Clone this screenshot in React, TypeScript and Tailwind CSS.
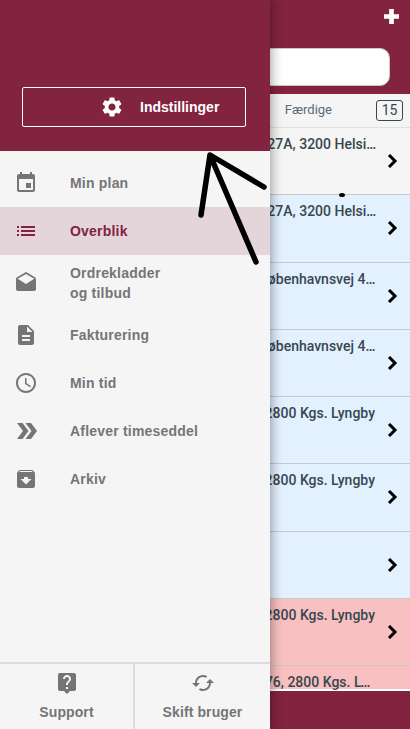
const FONT = "font-['Liberation_Sans',Arial,sans-serif]"

const ICONS = {
  event: 'M17 12h-5v5h5v-5zM16 1v2H8V1H6v2H5c-1.11 0-1.99.9-1.99 2L3 19c0 1.1.89 2 2 2h14c1.1 0 2-.9 2-2V5c0-1.1-.9-2-2-2h-1V1h-2zm3 18H5V8h14v11z',
  list: 'M3 13h2v-2H3v2zm0 4h2v-2H3v2zm0-8h2V7H3v2zm4 4h14v-2H7v2zm0 4h14v-2H7v2zM7 7v2h14V7H7z',
  drafts: 'M21.99 8c0-.72-.37-1.35-.94-1.7L12 1 2.95 6.3C2.38 6.65 2 7.28 2 8v10c0 1.1.9 2 2 2h16c1.1 0 2-.9 2-2l-.01-10zM12 13L3.74 7.84 12 3l8.26 4.84L12 13z',
  description: 'M14 2H6c-1.1 0-1.99.9-1.99 2L4 20c0 1.1.89 2 1.99 2H18c1.1 0 2-.9 2-2V8l-6-6zm2 16H8v-2h8v2zm0-4H8v-2h8v2zm-3-5V3.5L18.5 9H13z',
  schedule: 'M11.99 2C6.47 2 2 6.48 2 12s4.47 10 9.99 10C17.52 22 22 17.52 22 12S17.52 2 11.99 2zM12 20c-4.42 0-8-3.58-8-8s3.58-8 8-8 8 3.58 8 8-3.58 8-8 8zm.5-13H11v6l5.25 3.15.75-1.23-4.5-2.67z',
  archive: 'M20.54 5.23l-1.39-1.68C18.88 3.21 18.47 3 18 3H6c-.47 0-.88.21-1.16.55L3.46 5.23C3.17 5.57 3 6.02 3 6.5V19c0 1.1.9 2 2 2h14c1.1 0 2-.9 2-2V6.5c0-.48-.17-.93-.46-1.27zM12 17.5L6.5 12H10v-2h4v2h3.5L12 17.5zM5.12 5l.81-1h12l.94 1H5.12z',
  settings: 'M19.14 12.94c.04-.3.06-.61.06-.94 0-.32-.02-.64-.07-.94l2.03-1.58c.18-.14.23-.41.12-.61l-1.92-3.32c-.12-.22-.37-.29-.59-.22l-2.39.96c-.5-.38-1.03-.7-1.62-.94l-.36-2.54c-.04-.24-.24-.41-.48-.41h-3.84c-.24 0-.43.17-.47.41l-.36 2.54c-.59.24-1.13.57-1.62.94l-2.39-.96c-.22-.08-.47 0-.59.22L2.74 8.87c-.12.21-.08.47.12.61l2.03 1.58c-.05.3-.09.63-.09.94s.02.64.07.94l-2.03 1.58c-.18.14-.23.41-.12.61l1.92 3.32c.12.22.37.29.59.22l2.39-.96c.5.38 1.03.7 1.62.94l.36 2.54c.05.24.24.41.48.41h3.84c.24 0 .44-.17.47-.41l.36-2.54c.59-.24 1.13-.56 1.62-.94l2.39.96c.22.08.47 0 .59-.22l1.92-3.32c.12-.22.07-.47-.12-.61l-2.01-1.58zM12 15.6c-1.98 0-3.6-1.62-3.6-3.6s1.62-3.6 3.6-3.6 3.6 1.62 3.6 3.6-1.62 3.6-3.6 3.6z',
  help: 'M19 2H5c-1.11 0-2 .9-2 2v14c0 1.1.89 2 2 2h4l3 3 3-3h4c1.1 0 2-.9 2-2V4c0-1.1-.9-2-2-2zm-6 16h-2v-2h2v2zm2.07-7.75l-.9.92C13.45 11.9 13 12.5 13 14h-2v-.5c0-1.1.45-2.1 1.17-2.83l1.24-1.26c.37-.36.59-.86.59-1.41 0-1.1-.9-2-2-2s-2 .9-2 2H8c0-2.21 1.79-4 4-4s4 1.79 4 4c0 .88-.36 1.68-.93 2.25z',
  cached: 'M19 8l-4 4h3c0 3.31-2.69 6-6 6-1.01 0-1.97-.25-2.8-.7l-1.46 1.46C8.97 19.54 10.43 20 12 20c4.42 0 8-3.58 8-8h3l-4-4zM6 12c0-3.31 2.69-6 6-6 1.01 0 1.97.25 2.8.7l1.46-1.46C15.03 4.46 13.57 4 12 4c-4.42 0-8 3.58-8 8H1l4 4 4-4H6z',
  doubleChevron: 'M3 4h5.5l6 8-6 8H3l6-8zM11.5 4H17l6 8-6 8h-5.5l6-8z',
} as const

function Icon({ name, className }: { name: keyof typeof ICONS; className?: string }) {
  return (
    <svg viewBox="0 0 24 24" fill="currentColor" className={className}>
      <path d={ICONS[name]} />
    </svg>
  )
}

function Chevron() {
  return (
    <svg viewBox="0 0 12 14" className="w-[12px] h-[14px] shrink-0" fill="none" stroke="black" strokeWidth="3">
      <path d="M3 1 9 7 3 13" />
    </svg>
  )
}

const ROW_TEXT = "truncate text-[14px] leading-[16px] font-['Roboto',sans-serif] font-medium text-[#37474f]"

const ROWS = [
  { text: 'Hovedvej 27A, 3200 Helsinge', bg: 'bg-[#f5f5f5]', box: 'pl-[206px] pr-[6px]' },
  { text: 'Hovedvej 27A, 3200 Helsinge', bg: 'bg-[#e3f0fe]', box: 'pl-[206px] pr-[6px]' },
  { text: 'Københavnsvej 47, 2800 Kgs. Lyngby', bg: 'bg-[#e3f0fe]', box: 'pl-[259px] pr-[6px]' },
  { text: 'Københavnsvej 47, 2800 Kgs. Lyngby', bg: 'bg-[#e3f0fe]', box: 'pl-[259px] pr-[6px]' },
  { text: 'Toftebæk 2, 2800 Kgs. Lyngby', bg: 'bg-[#e3f0fe]', box: 'pl-[150px] pr-[11px] text-right' },
  { text: 'Toftebæk 2, 2800 Kgs. Lyngby', bg: 'bg-[#e3f0fe]', box: 'pl-[150px] pr-[11px] text-right' },
  { text: '', bg: 'bg-[#e3f0fe]', box: 'pl-[150px] pr-[11px]' },
  { text: 'Toftebæk 2, 2800 Kgs. Lyngby', bg: 'bg-[#f8c0c0]', box: 'pl-[150px] pr-[11px] text-right' },
]

const MENU: Array<{ icon: keyof typeof ICONS; label: string[]; active?: boolean }> = [
  { icon: 'event', label: ['Min plan'] },
  { icon: 'list', label: ['Overblik'], active: true },
  { icon: 'drafts', label: ['Ordrekladder', 'og tilbud'] },
  { icon: 'description', label: ['Fakturering'] },
  { icon: 'schedule', label: ['Min tid'] },
  { icon: 'doubleChevron', label: ['Aflever timeseddel'] },
  { icon: 'archive', label: ['Arkiv'] },
]

export default function App() {
  return (
    <div className={`relative w-[410px] h-[729px] overflow-hidden bg-[#82233f] ${FONT}`}>
      {/* page behind the drawer */}
      <div className="flex flex-col h-full">
        <div className="h-[94px] shrink-0 flex flex-col items-end pr-[11px] pt-[9px]">
          <svg viewBox="0 0 16 16" className="w-[15px] h-[15px]" fill="white">
            <path d="M5.5 0h5v5.5H16v5h-5.5V16h-5v-5.5H0v-5h5.5z" />
          </svg>
          <div className="mt-[24px] mr-[9px] w-[300px] h-[38px] rounded-[10px] bg-white border border-[#cfc4c8]" />
        </div>
        <div className="h-[34px] shrink-0 bg-[#f5f5f5] flex items-center justify-end gap-[44px] pr-[7px] pb-[1px] border-b border-[#e0e0e0] font-['Roboto',sans-serif]">
          <span className="text-[13px] text-[#546e7a]">Færdige</span>
          <span className="w-[27px] h-[21px] flex items-center justify-center rounded-[3px] border border-[#37474f] text-[14px] text-[#37474f]">
            15
          </span>
        </div>
        {ROWS.map((r, i) => (
          <div key={i} className={`h-[67.25px] shrink-0 flex items-center pr-[12px] border-b border-[#c8c8c8] ${r.bg}`}>
            <div className={`flex-1 min-w-0 self-start pt-[8px] ${r.box}`}>
              <p className={ROW_TEXT}>{r.text}</p>
            </div>
            <Chevron />
          </div>
        ))}
        <div className="h-[25px] shrink-0 bg-[#f8c0c0] border-b-2 border-white pl-[211px] pr-[33px]">
          <p className={`${ROW_TEXT} pt-[8px]`}>Toftevej 76, 2800 Kgs. Lyngby</p>
        </div>
      </div>

      {/* drawer */}
      <aside className="absolute inset-y-0 left-0 w-[270px] flex flex-col bg-[#f5f5f5] shadow-[0_0_12px_rgba(0,0,0,0.45)]">
        <div className="h-[151px] shrink-0 bg-[#82233f] px-[22px] pt-[87px]">
          <button className="w-[224px] h-[40px] flex items-center rounded-[2px] border border-white text-white pl-[77px]">
            <Icon name="settings" className="w-[24px] h-[24px]" />
            <span className="ml-[16px] text-[14px] font-bold">Indstillinger</span>
          </button>
        </div>
        <nav className="pt-[8px] flex-1">
          {MENU.map((m) => (
            <div
              key={m.label[0]}
              className={`flex items-center pl-[14px] ${m.label.length > 1 ? 'h-[56px]' : 'h-[48px]'} ${
                m.active ? 'bg-[#e3d5da] text-[#82233f]' : 'text-[#757575]'
              }`}
            >
              <Icon name={m.icon} className="w-[24px] h-[24px] shrink-0" />
              <div className="ml-[32px] text-[14px] leading-[20px] font-bold tracking-[0.2px]">
                {m.label.map((l) => (
                  <div key={l}>{l}</div>
                ))}
              </div>
            </div>
          ))}
        </nav>
        <div className="h-[67px] shrink-0 flex border-t-2 border-[#dcdcdc] text-[#757575]">
          <div className="w-[135px] flex flex-col items-center pt-[7px] border-r-2 border-[#dcdcdc]">
            <Icon name="help" className="w-[24px] h-[24px]" />
            <span className="mt-[7px] text-[14px] font-bold tracking-[0.1px]">Support</span>
          </div>
          <div className="flex-1 flex flex-col items-center pt-[7px]">
            <Icon name="cached" className="w-[24px] h-[24px]" />
            <span className="mt-[7px] text-[14px] font-bold tracking-[0.1px]">Skift bruger</span>
          </div>
        </div>
      </aside>

      {/* hand-drawn arrow on top of the screenshot */}
      <svg className="absolute inset-0 pointer-events-none" width="410" height="729" fill="none" stroke="black" strokeWidth="5.5" strokeLinecap="round" strokeLinejoin="round">
        <path d="M201 215 210 155 264 187M210 155 256 262" />
        <ellipse cx="342" cy="195" rx="3" ry="2" fill="black" stroke="none" />
      </svg>
    </div>
  )
}
